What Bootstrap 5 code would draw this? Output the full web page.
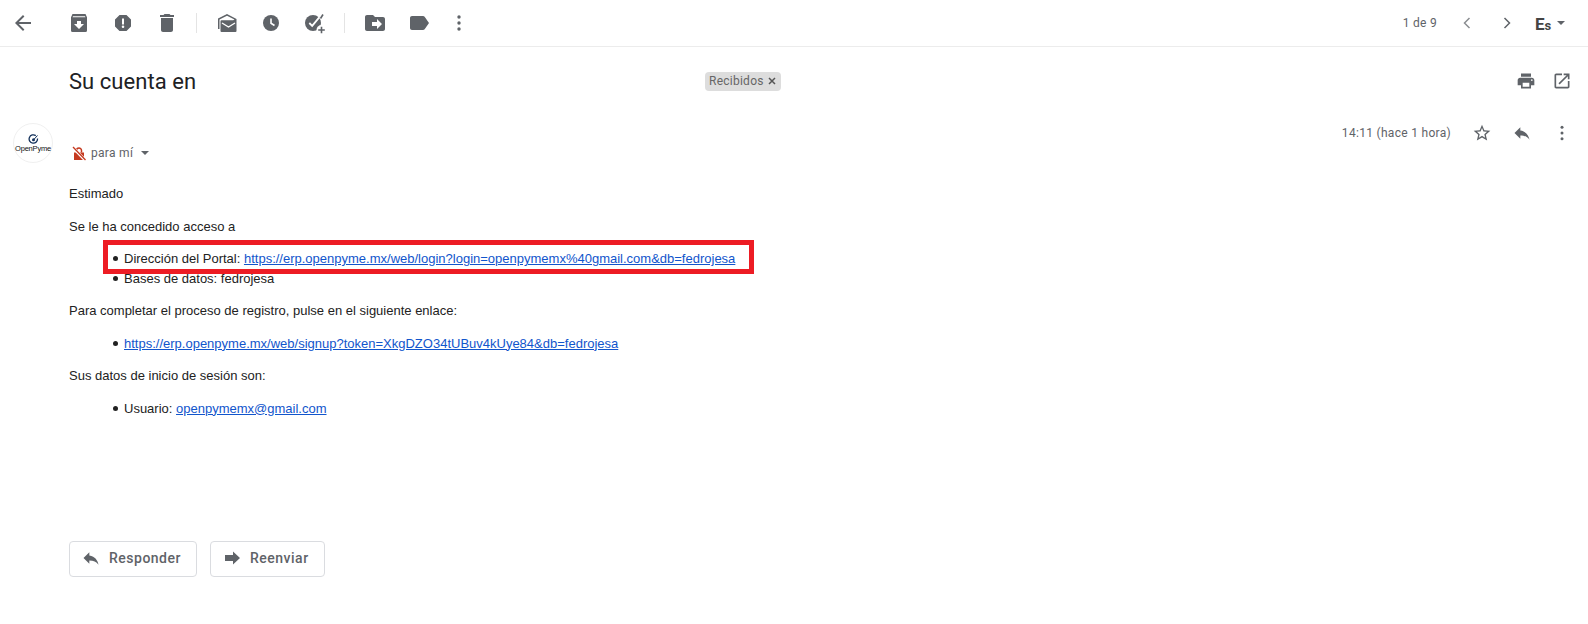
<!DOCTYPE html>
<html lang="es"><head><meta charset="utf-8"><title>Su cuenta en</title>
<link href="https://cdn.jsdelivr.net/npm/bootstrap@5.3.0/dist/css/bootstrap.min.css" rel="stylesheet">
<style>
html,body{height:624px;overflow:hidden;background:#fff}
body{font-family:"Liberation Sans",Arial,sans-serif;color:#222;position:relative}
svg{display:block;fill:#5f6368}
.tbar{height:47px;border-bottom:1px solid #ececec;padding-left:1px;padding-right:23px}
.cell{width:44px;height:46px}
.sepv{width:1px;height:20px;background:#e4e4e4;margin:0 8px 0 7px}
.arch{margin-left:12px}
.lastc{margin-left:-4px}
.pager{font:12px Roboto,sans-serif;letter-spacing:.3px;color:#5f6368;margin-right:10px}
.chev{width:40px}
.brand{font:700 17px Roboto,sans-serif;color:#444;margin:4px 2px 0 8px;width:20px;line-height:20px}
.brand small{font-size:13px;font-weight:700}
.caretd{width:0;height:0;border-left:4px solid transparent;border-right:4px solid transparent;border-top:4px solid #5f6368}
.subj{height:68px;padding-left:69px;padding-right:8px}
.subj h1{font:400 22px Roboto,sans-serif;letter-spacing:.05px;color:#202124;margin:0;width:636px}
.chipx{height:19px;width:76px;background:#ddd;border-radius:4px;font:12px Roboto,sans-serif;letter-spacing:.25px;color:#666;padding-left:4px}
.chipx svg{margin-left:3px}
.tool{width:36px;height:36px}
.msghead{padding-left:13px;padding-right:8px;height:69px}
.avatar{width:40px;height:40px;border:1px solid #f0f0f0;border-radius:50%;margin-right:16px;margin-top:8px;color:#111}
.avatar span{font:7.5px "Liberation Sans",sans-serif;letter-spacing:-.2px;line-height:8px}
.tome{margin-top:30px;font:12px Roboto,sans-serif;letter-spacing:.3px;color:#5f6368}
.tome svg{margin-left:2px}
.stamp{font:12px Roboto,sans-serif;letter-spacing:.3px;color:#5f6368;margin-right:13px}
.gapr{margin-right:4px}
.msgbody{padding-left:69px;font-size:13px;line-height:19.5px;color:#222}
.msgbody p{margin:0 0 13px}
.msgbody ul{margin:0 0 13px;padding-left:55px;list-style:none}
.msgbody li{position:relative}
.msgbody li::before{content:"";position:absolute;left:-11px;top:7px;width:5px;height:5px;border-radius:50%;background:#222}
.msgbody a{color:#15c}
.redbox{position:absolute;left:103px;top:240px;width:651px;height:34px;border:5px solid #ed1c24}
.acts{position:absolute;left:69px;top:541px;gap:13px}
.rbtn{height:36px;border:1px solid #dadce0;border-radius:4px;background:#fff;font:500 14px Roboto,sans-serif;letter-spacing:.5px;color:#5f6368;padding:0 15px 2px 11px}
.rbtn svg{margin-right:8px}
</style></head><body>
<div class="tbar d-flex align-items-center">
<div class="cell d-flex align-items-center justify-content-center"><svg width="24" height="24" viewBox="0 0 24 24"><path d="M20 11H7.83l5.59-5.59L12 4l-8 8 8 8 1.41-1.41L7.83 13H20v-2z"/></svg></div>
<div class="cell arch d-flex align-items-center justify-content-center"><svg width="20" height="20" viewBox="0 0 20 20"><path fill-rule="evenodd" d="M3.500 1h13L18 4.200V17.500a1.500 1.500 0 0 1-1.500 1.500h-13A1.500 1.500 0 0 1 2 17.500V4.200zM4 3.200l-.4 1h12.800l-.4-1zM8 8v3H5l5 5 5-5h-3V8z"/></svg></div>
<div class="cell d-flex align-items-center justify-content-center"><svg width="20" height="20" viewBox="0 0 20 20"><path fill-rule="evenodd" d="M6.500 2h7L18 6.500v7L13.500 18h-7L2 13.500v-7zM9 5.500v6h2v-6zM10 12.500a1.300 1.300 0 1 0 0 2.600 1.300 1.300 0 0 0 0-2.600z"/></svg></div>
<div class="cell d-flex align-items-center justify-content-center"><svg width="24" height="24" viewBox="0 0 24 24"><path d="M6 19c0 1.100.9 2 2 2h8c1.100 0 2-.9 2-2V7H6v12zM19 4h-3.500l-1-1h-5l-1 1H5v2h14V4z"/></svg></div>
<div class="sepv"></div>
<div class="cell d-flex align-items-center justify-content-center"><svg width="20" height="20" viewBox="0 0 20 20"><path d="M10 1L1 5.500V16h1.500V6.400L10 2.700l7.500 3.700-1.300.8H4.500a1 1 0 0 0-1 1V18a1 1 0 0 0 1 1h14a1 1 0 0 0 1-1V6z"/><path d="M5 10l6.500 4 6.500-4" fill="none" stroke="#fff" stroke-width="1.400"/></svg></div>
<div class="cell d-flex align-items-center justify-content-center"><svg width="20" height="20" viewBox="0 0 20 20"><circle cx="10" cy="10" r="8"/><path d="M10 5.500V10.300l3.500 2.200" fill="none" stroke="#fff" stroke-width="1.600"/></svg></div>
<div class="cell d-flex align-items-center justify-content-center"><svg width="24" height="24" viewBox="0 0 24 24"><circle cx="10" cy="12" r="8"/><path d="M17.500 7.500l2.500-4" fill="none" stroke="#5f6368" stroke-width="1.600"/><path d="M6.300 12l2.900 2.900 7-8.500" fill="none" stroke="#fff" stroke-width="1.800"/><circle cx="18.500" cy="19" r="5" fill="#fff"/><path d="M17.700 15.700h1.600v2.500h2.500v1.600h-2.500v2.500h-1.600v-2.500h-2.500v-1.600h2.500z"/></svg></div>
<div class="sepv"></div>
<div class="cell d-flex align-items-center justify-content-center"><svg width="24" height="24" viewBox="0 0 24 24"><path fill-rule="evenodd" d="M4 4h6l2 2h8c1.100 0 2 .9 2 2v10c0 1.100-.9 2-2 2H4c-1.100 0-2-.9-2-2V6c0-1.100.9-2 2-2zM14 8v3H9v4h5v3l5-5z"/></svg></div>
<div class="cell d-flex align-items-center justify-content-center"><svg width="24" height="24" viewBox="0 0 24 24"><path d="M17.630 5.840C17.270 5.330 16.670 5 16 5L5 5.010C3.900 5.010 3 5.900 3 7v10c0 1.100.9 1.990 2 1.990L16 19c.67 0 1.270-.33 1.630-.84L22 12l-4.370-6.160z" /></svg></div>
<div class="cell lastc d-flex align-items-center justify-content-center"><svg width="24" height="24" viewBox="0 0 24 24"><circle cx="12" cy="6" r="1.700"/><circle cx="12" cy="12" r="1.700"/><circle cx="12" cy="18" r="1.700"/></svg></div>
<div class="ms-auto pager">1 de 9</div>
<div class="chev d-flex justify-content-center"><svg width="20" height="20" viewBox="0 0 20 20"><path d="M12.500 5l-5 5 5 5" fill="none" stroke="#8a8d91" stroke-width="1.500"/></svg></div>
<div class="chev d-flex justify-content-center"><svg width="20" height="20" viewBox="0 0 20 20"><path d="M7.500 5l5 5-5 5" fill="none" stroke="#5f6368" stroke-width="1.500"/></svg></div>
<div class="brand">E<small>s</small></div>
<div class="caretd"></div>
</div>
<div class="subj d-flex align-items-center">
<h1>Su cuenta en</h1>
<div class="chipx d-flex align-items-center">Recibidos<svg width="10" height="10" viewBox="0 0 10 10"><path d="M2 2l6 6M8 2l-6 6" stroke="#555" stroke-width="1.500" fill="none"/></svg></div>
<div class="ms-auto tool d-flex align-items-center justify-content-center"><svg width="20" height="20" viewBox="0 0 24 24"><path d="M19 8H5c-1.660 0-3 1.340-3 3v6h4v4h12v-4h4v-6c0-1.660-1.340-3-3-3zm-3 11H8v-5h8v5zm3-7c-.55 0-1-.45-1-1s.45-1 1-1 1 .45 1 1-.45 1-1 1zm-1-9H6v4h12V3z"/></svg></div>
<div class="tool d-flex align-items-center justify-content-center"><svg width="20" height="20" viewBox="0 0 24 24"><path d="M19 19H5V5h7V3H5c-1.110 0-2 .9-2 2v14c0 1.100.89 2 2 2h14c1.100 0 2-.9 2-2v-7h-2v7zM14 3v2h3.590l-9.830 9.830 1.410 1.410L19 6.410V10h2V3h-7z"/></svg></div>
</div>
<div class="msghead d-flex align-items-start">
<div class="avatar d-flex flex-column align-items-center justify-content-center">
<svg width="11" height="11" viewBox="0 0 11 11"><path d="M7.800 1.600A4.200 4.200 0 1 0 9.500 4.500" fill="none" stroke="#12305a" stroke-width="1.300"/><circle cx="5.500" cy="5.800" r="1.500" fill="#12305a"/><path d="M6 5.300L9.500 1.500" stroke="#12305a" stroke-width="1"/></svg>
<span>OpenPyme</span></div>
<div class="tome d-flex align-items-center">
<svg width="16" height="16" viewBox="0 0 16 16"><path d="M3 7.500h10V15H3z" style="fill:#c5391f"/><path d="M5.500 7.500V5.500a2.500 2.500 0 0 1 5 0v2" fill="none" stroke="#c5391f" stroke-width="1.500"/><path d="M2 2.500L14 15" stroke="#fff" stroke-width="3"/><path d="M2 2l12.500 13" stroke="#c5391f" stroke-width="1.300"/></svg>
<span class="ms-1">para mí</span><span class="caretd ms-2"></span></div>
<div class="ms-auto d-flex align-items-center">
<div class="stamp">14:11 (hace 1 hora)</div>
<div class="tool gapr d-flex align-items-center justify-content-center"><svg width="20" height="20" viewBox="0 0 24 24"><path d="M22 9.240l-7.190-.62L12 2 9.190 8.630 2 9.240l5.460 4.730L5.820 21 12 17.270 18.180 21l-1.630-7.030L22 9.240zM12 15.400l-3.760 2.270 1-4.280-3.320-2.880 4.380-.38L12 6.100l1.710 4.040 4.380.38-3.320 2.880 1 4.280L12 15.400z"/></svg></div>
<div class="tool gapr d-flex align-items-center justify-content-center"><svg width="20" height="20" viewBox="0 0 24 24"><path d="M10 9V5l-7 7 7 7v-4.100c5 0 8.500 1.600 11 5.100-1-5-4-10-11-11z"/></svg></div>
<div class="tool d-flex align-items-center justify-content-center"><svg width="20" height="20" viewBox="0 0 24 24"><circle cx="12" cy="5" r="1.800"/><circle cx="12" cy="12" r="1.800"/><circle cx="12" cy="19" r="1.800"/></svg></div>
</div>
</div>
<div class="msgbody">
<p>Estimado</p>
<p>Se le ha concedido acceso a</p>
<ul><li>Dirección del Portal: <a href="#">https://erp.openpyme.mx/web/login?login=openpymemx%40gmail.com&amp;db=fedrojesa</a></li><li>Bases de datos: fedrojesa</li></ul>
<p>Para completar el proceso de registro, pulse en el siguiente enlace:</p>
<ul><li><a href="#">https://erp.openpyme.mx/web/signup?token=XkgDZO34tUBuv4kUye84&amp;db=fedrojesa</a></li></ul>
<p>Sus datos de inicio de sesión son:</p>
<ul><li>Usuario: <a href="#">openpymemx@gmail.com</a></li></ul>
</div>
<div class="redbox"></div>
<div class="acts d-flex">
<div class="rbtn d-flex align-items-center"><svg width="20" height="20" viewBox="0 0 24 24"><path d="M10 9V5l-7 7 7 7v-4.100c5 0 8.500 1.600 11 5.100-1-5-4-10-11-11z"/></svg>Responder</div>
<div class="rbtn d-flex align-items-center"><svg width="20" height="20" viewBox="0 0 20 20"><path d="M3 7h8V3.500l7 6.500-7 6.500V13H3z"/></svg>Reenviar</div>
</div>
</body></html>
